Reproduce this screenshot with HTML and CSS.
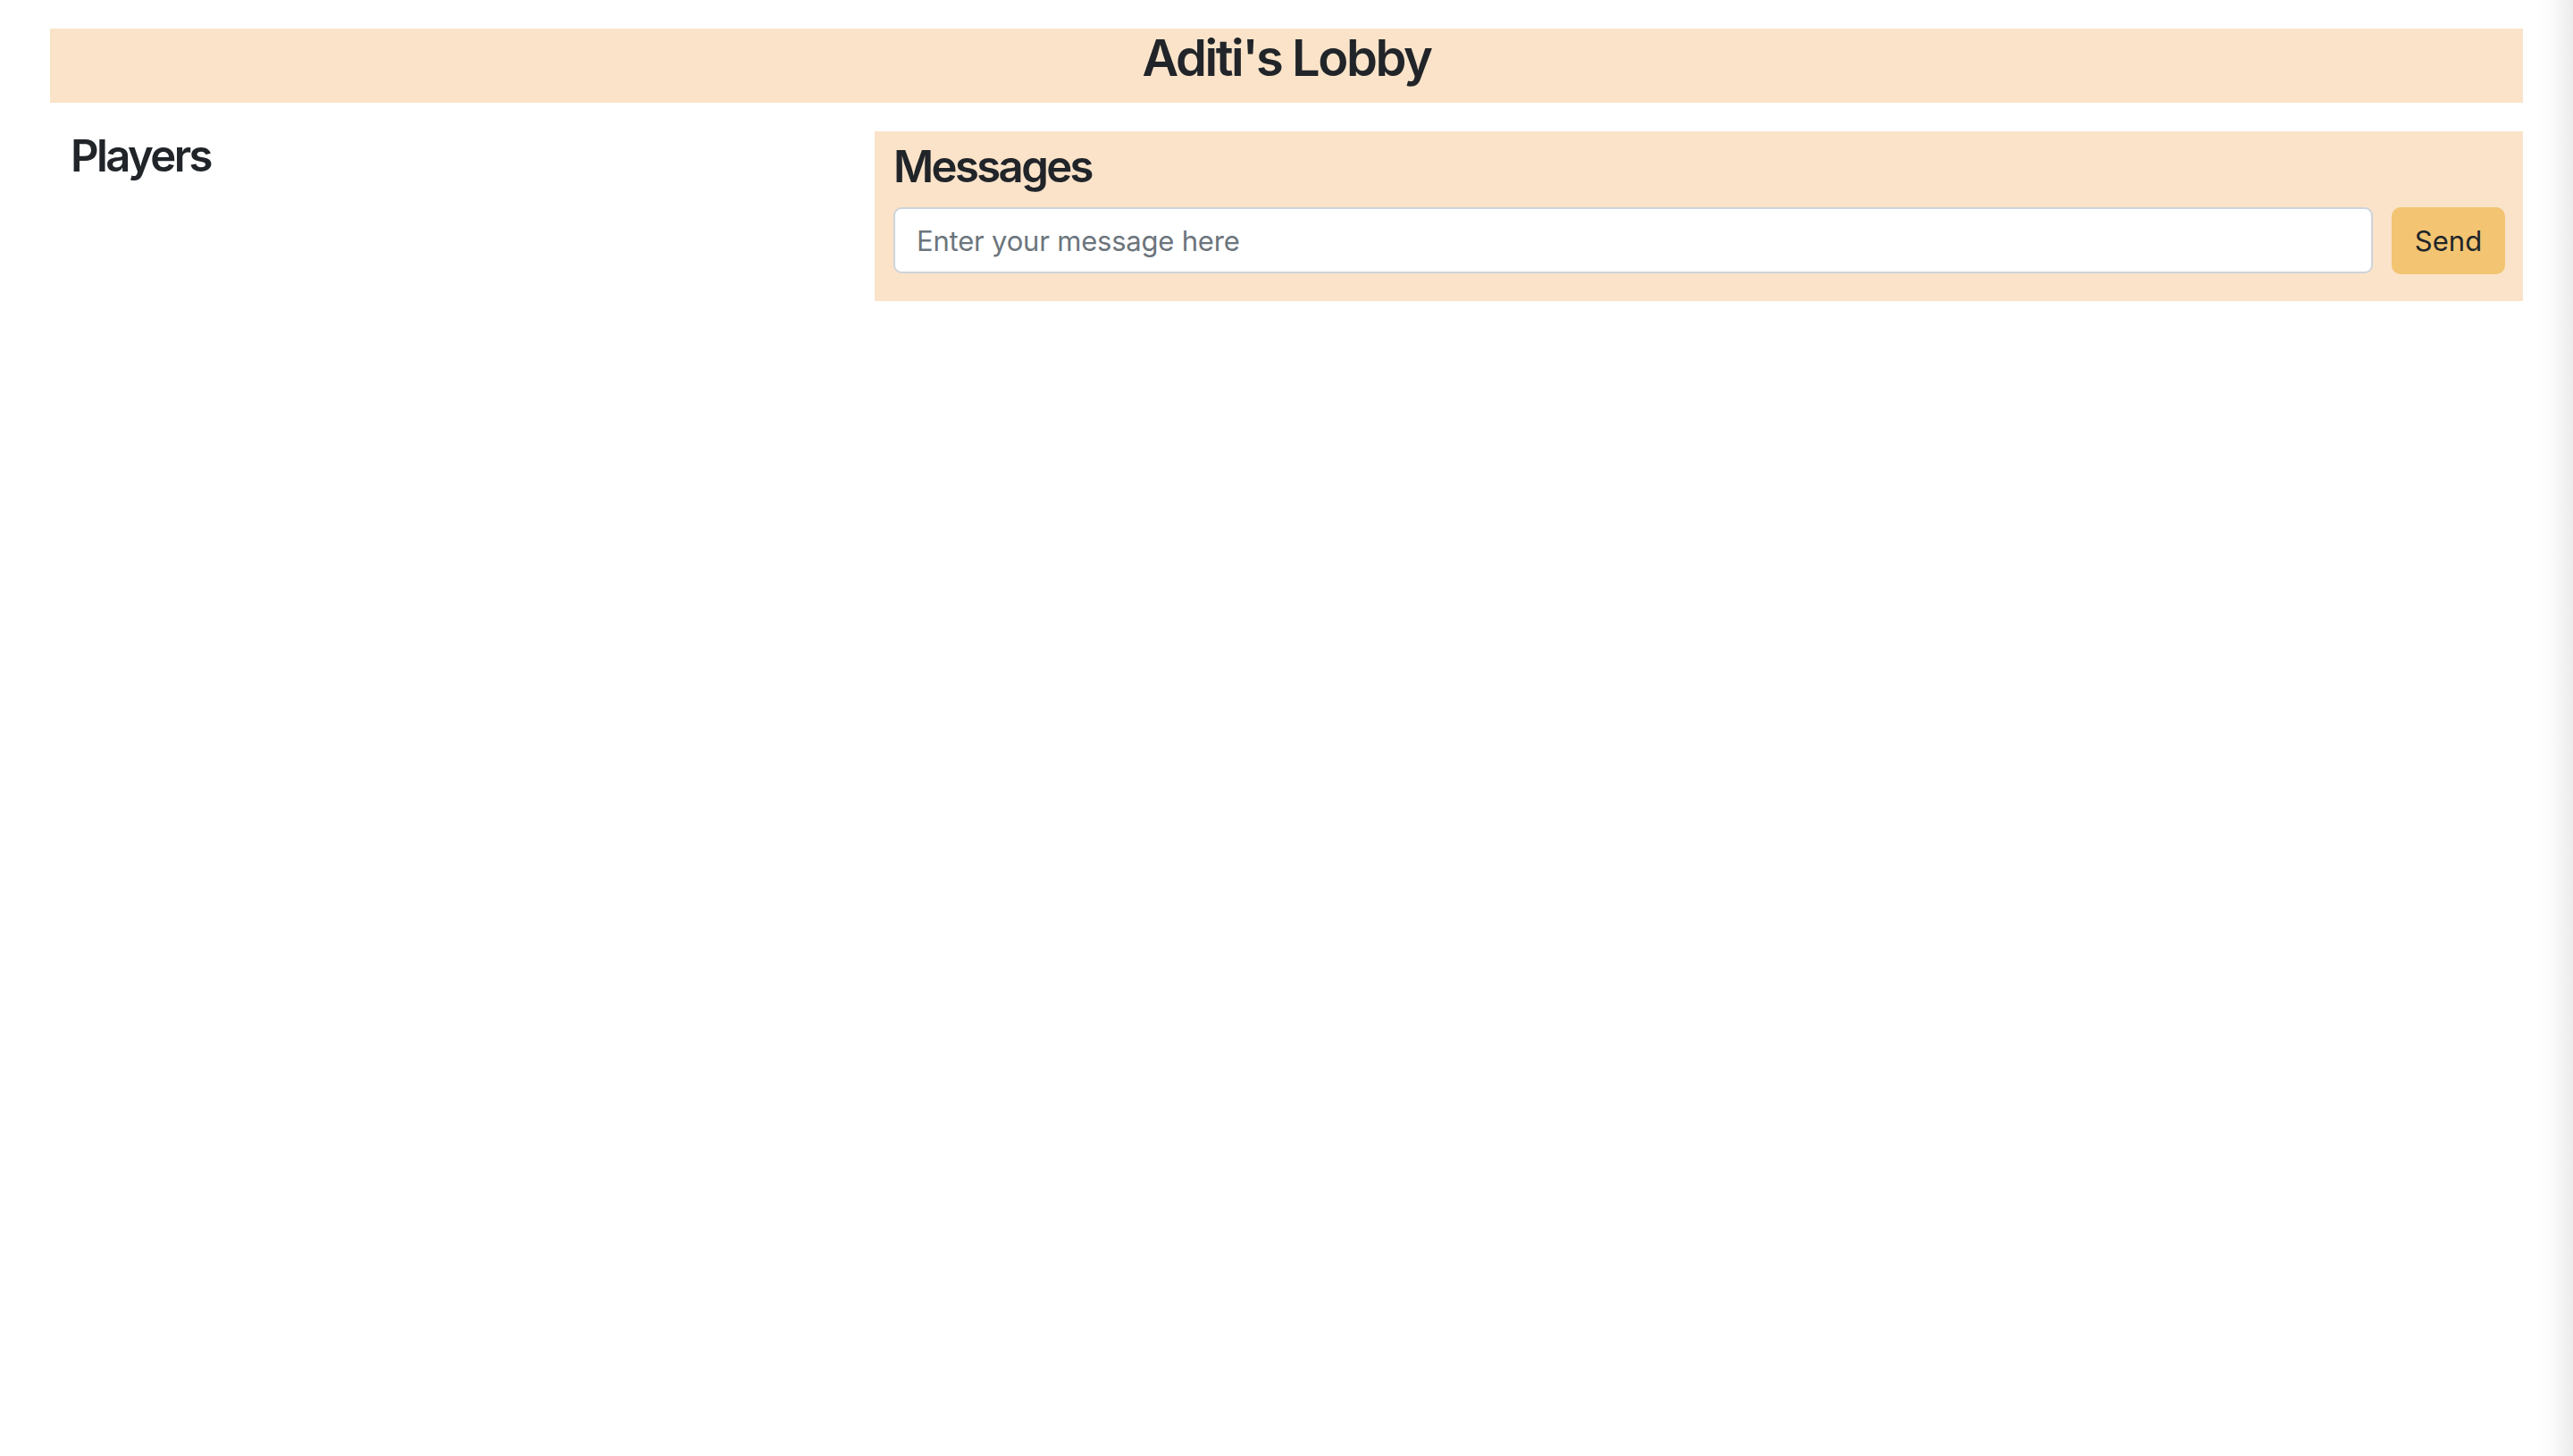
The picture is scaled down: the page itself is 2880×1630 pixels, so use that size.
FILE: index.html
```html
<!DOCTYPE html>
<html lang="en">
<head>
<meta charset="utf-8">
<title>Aditi's Lobby</title>
<link rel="stylesheet" href="styles.css">
</head>
<body>
<div class="page">
  <header class="lobby-header">
    <h1 class="lobby-title">Aditi's Lobby</h1>
  </header>
  <div class="lobby-row">
    <section class="players-col">
      <h3 class="section-title">Players</h3>
    </section>
    <section class="messages-panel">
      <h3 class="section-title">Messages</h3>
      <form class="message-form">
        <input class="message-input" type="text" placeholder="Enter your message here">
        <button class="send-btn" type="button">Send</button>
      </form>
    </section>
  </div>
</div>
</body>
</html>
```

FILE: styles.css
```css
html {
  min-height: 100%;
  background: linear-gradient(to right, #ffffff 0, #ffffff calc(100% - 40px), #fafafa calc(100% - 22px), #ececec 100%);
}
body {
  margin: 0;
  min-height: 1630px;
  font-family: Inter, "Noto Sans", sans-serif;
  color: #212529;
}
.page {
  padding: 32px 56px 0 56px;
}
.lobby-header {
  background: #fae3c9;
  height: 83px;
  display: flex;
  justify-content: center;
  align-items: flex-start;
}
.lobby-title {
  margin: 0;
  font-size: 56px;
  line-height: 67px;
  font-weight: 600;
  letter-spacing: -2.4px;
}
.lobby-row {
  margin-top: 32px;
  display: grid;
  grid-template-columns: 923px 1fr;
  align-items: start;
}
.players-col {
  padding-left: 23px;
}
.section-title {
  margin: 0;
  font-size: 49px;
  line-height: 56px;
  font-weight: 600;
  letter-spacing: -2.6px;
}
.messages-panel {
  background: #fae3c9;
  padding: 12px 20px 30px 21px;
}
.message-form {
  margin: 17px 0 0 0;
  display: flex;
  gap: 21px;
}
.message-input {
  flex: 1;
  height: 74px;
  box-sizing: border-box;
  border: 2px solid #ced4da;
  border-radius: 9px;
  background: #ffffff;
  padding: 0 24px;
  font-family: Inter, "Noto Sans", sans-serif;
  font-size: 31px;
  letter-spacing: -0.2px;
  color: #212529;
  outline: none;
}
.message-input::placeholder {
  color: #6c757d;
}
.send-btn {
  width: 127px;
  height: 75px;
  border: none;
  border-radius: 10px;
  background: #f3c472;
  font-family: Inter, "Noto Sans", sans-serif;
  font-size: 31px;
  color: #212529;
  padding: 0;
}
```
